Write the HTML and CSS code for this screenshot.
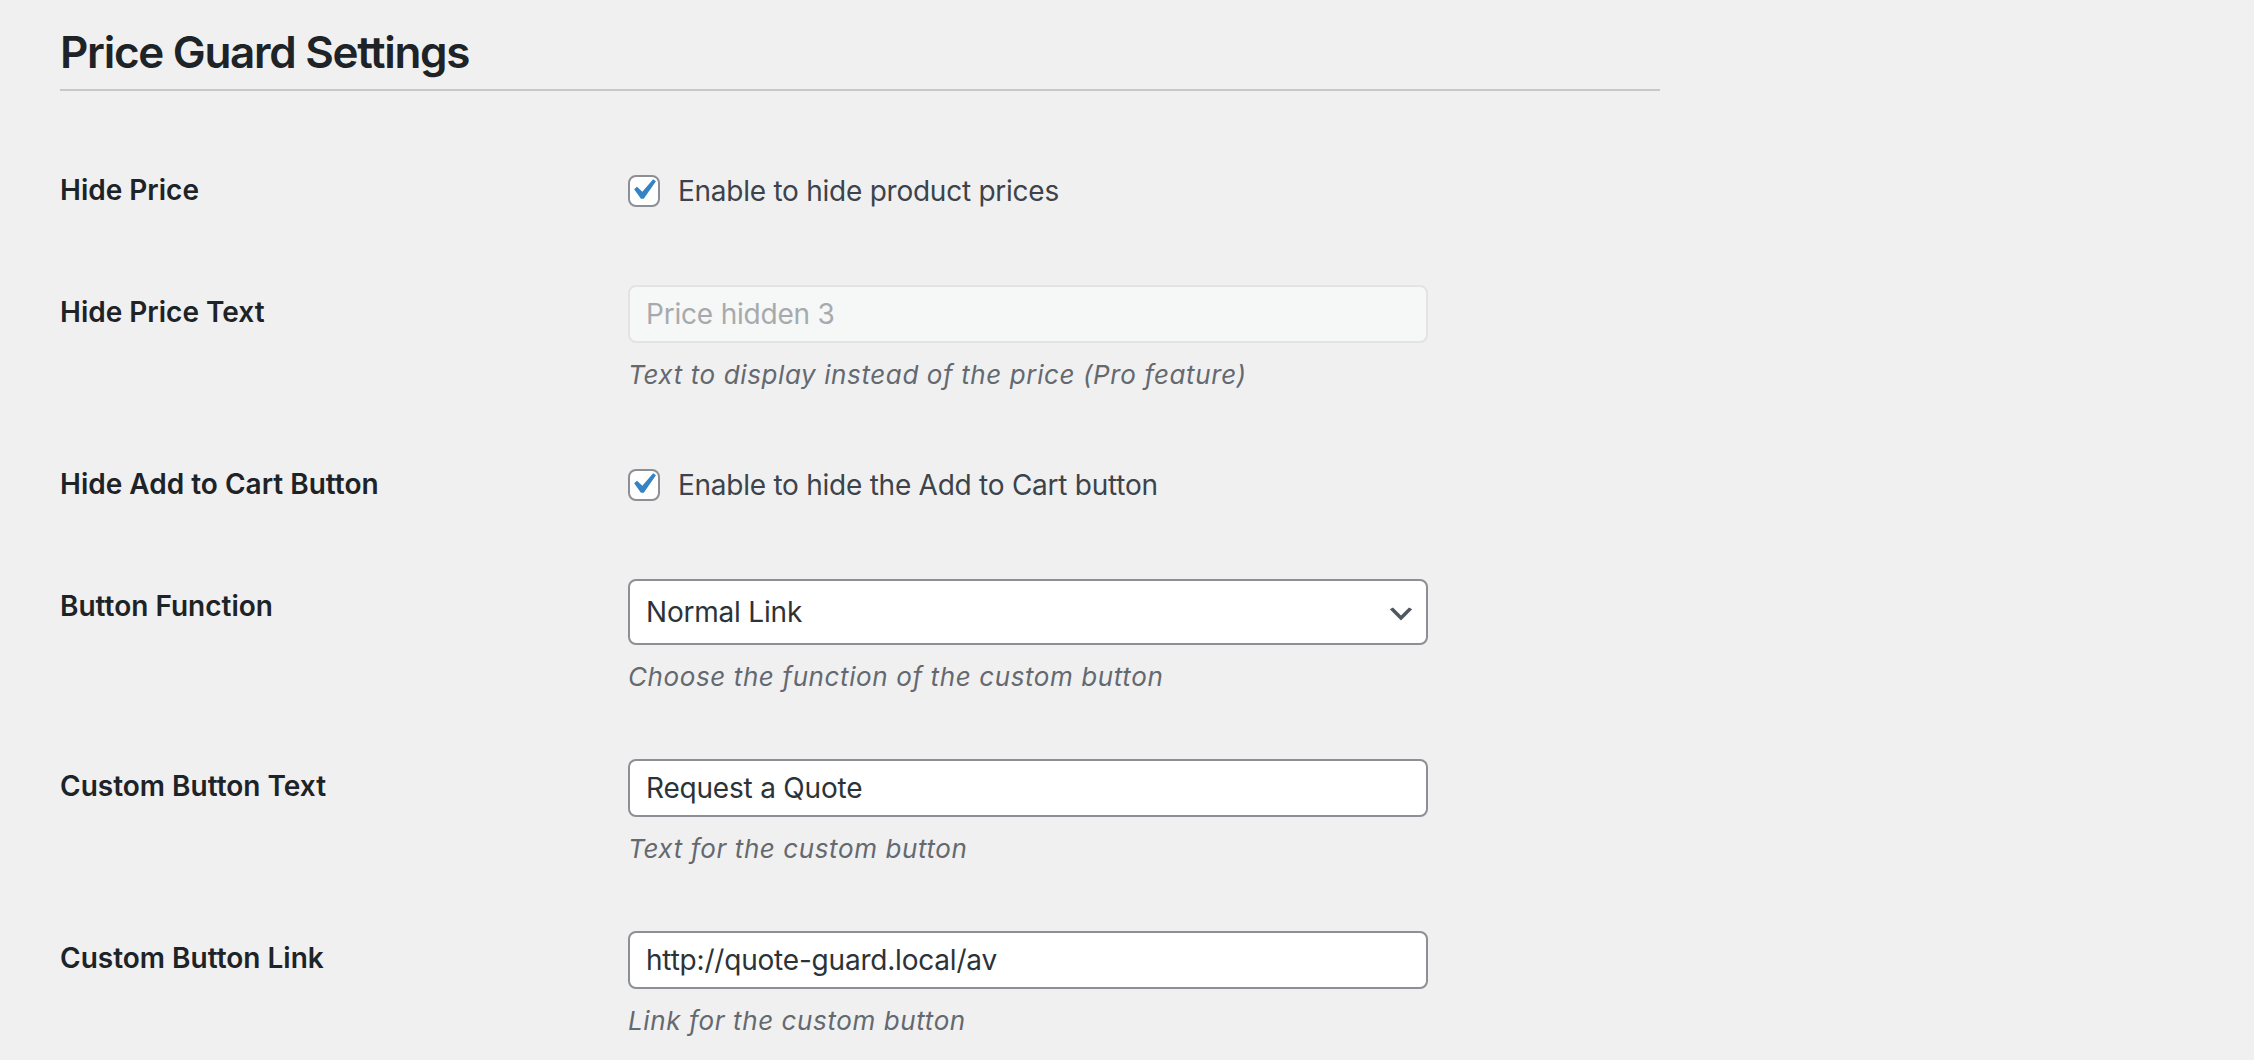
FILE: index.html
```html
<!DOCTYPE html>
<html lang="en">
<head>
<meta charset="utf-8">
<title>Price Guard Settings</title>
<link rel="stylesheet" href="styles.css">
</head>
<body>
<div class="wrap">
  <h1 class="page-title">Price Guard Settings</h1>
  <div class="form-table">
    <div class="row row-check">
      <div class="th">Hide Price</div>
      <div class="td">
        <label class="check-label">
          <span class="checkbox"><svg class="tick" viewBox="0 0 20 20" width="42" height="42"><path d="M14.83 4.89l1.34.94-5.81 8.38H9.02L5.78 9.67l1.34-1.25 2.57 2.4z" fill="#3582c4"/></svg></span>
          <span>Enable to hide product prices</span>
        </label>
      </div>
    </div>
    <div class="row row-input">
      <div class="th">Hide Price Text</div>
      <div class="td">
        <input class="text-input is-disabled" type="text" placeholder="Price hidden 3" disabled>
        <p class="description">Text to display instead of the price (Pro feature)</p>
      </div>
    </div>
    <div class="row row-check">
      <div class="th">Hide Add to Cart Button</div>
      <div class="td">
        <label class="check-label">
          <span class="checkbox"><svg class="tick" viewBox="0 0 20 20" width="42" height="42"><path d="M14.83 4.89l1.34.94-5.81 8.38H9.02L5.78 9.67l1.34-1.25 2.57 2.4z" fill="#3582c4"/></svg></span>
          <span>Enable to hide the Add to Cart button</span>
        </label>
      </div>
    </div>
    <div class="row row-input">
      <div class="th">Button Function</div>
      <div class="td">
        <div class="select">
          <span>Normal Link</span>
          <svg class="chevron" viewBox="0 0 20 20" width="32" height="32"><path d="M5 6l5 5 5-5 2 1-7 7-7-7 2-1z" fill="#50575e"/></svg>
        </div>
        <p class="description">Choose the function of the custom button</p>
      </div>
    </div>
    <div class="row row-input">
      <div class="th">Custom Button Text</div>
      <div class="td">
        <input class="text-input" type="text" value="Request a Quote">
        <p class="description">Text for the custom button</p>
      </div>
    </div>
    <div class="row row-input">
      <div class="th">Custom Button Link</div>
      <div class="td">
        <input class="text-input" type="text" value="http://quote-guard.local/av">
        <p class="description">Link for the custom button</p>
      </div>
    </div>
  </div>
</div>
</body>
</html>
```
FILE: styles.css
```css
html, body {
  margin: 0;
  padding: 0;
  background: #f0f0f1;
}
body {
  font-family: Inter, "Noto Sans", "Liberation Sans", sans-serif;
  color: #3c434a;
  overflow: hidden;
}
.wrap {
  padding: 22px 0 0 60px;
  width: 1600px;
}
.page-title {
  margin: 0;
  font-size: 44px;
  line-height: 60px;
  font-weight: 600;
  letter-spacing: -1.3px;
  color: #1d2327;
  padding-bottom: 7px;
  border-bottom: 2px solid #c8c8c9;
}
.form-table {
  margin-top: 39px;
}
.row {
  display: grid;
  grid-template-columns: 568px 800px;
}
.th {
  padding: 42px 0 38px 0;
  font-size: 28px;
  line-height: 36px;
  font-weight: 600;
  color: #1d2327;
}
.td {
  padding: 30px 0 30px 0;
}
.row-input .td {
  padding-top: 33px;
}
.check-label {
  display: flex;
  align-items: center;
  height: 62px;
  font-size: 28px;
  letter-spacing: -0.25px;
  color: #3c434a;
  gap: 18px;
}
.checkbox {
  position: relative;
  box-sizing: border-box;
  width: 32px;
  height: 32px;
  border: 2px solid #8c8f94;
  border-radius: 8px;
  background: #fff;
  flex: none;
}
.tick {
  position: absolute;
  left: -8px;
  top: -8px;
}
.text-input {
  display: block;
  box-sizing: border-box;
  width: 800px;
  height: 58px;
  margin: 0;
  padding: 0 16px;
  border: 2px solid #8c8f94;
  border-radius: 8px;
  background: #fff;
  font-family: inherit;
  font-size: 28px;
  letter-spacing: -0.2px;
  color: #2c3338;
  outline: none;
}
.text-input.is-disabled {
  background: #f6f7f7;
  border-color: #e3e3e4;
}
.text-input.is-disabled::placeholder {
  color: #a7aaad;
}
.select {
  box-sizing: border-box;
  width: 800px;
  height: 66px;
  border: 2px solid #8c8f94;
  border-radius: 8px;
  background: #fff;
  display: flex;
  align-items: center;
  justify-content: space-between;
  padding: 0 9px 0 16px;
  font-size: 28px;
  letter-spacing: -0.2px;
  color: #2c3338;
}
.chevron {
  margin-top: 4px;
}
.description {
  margin: 12px 0 0 0;
  font-size: 26px;
  line-height: 39px;
  font-style: italic;
  letter-spacing: 0.6px;
  color: #646970;
}
```
